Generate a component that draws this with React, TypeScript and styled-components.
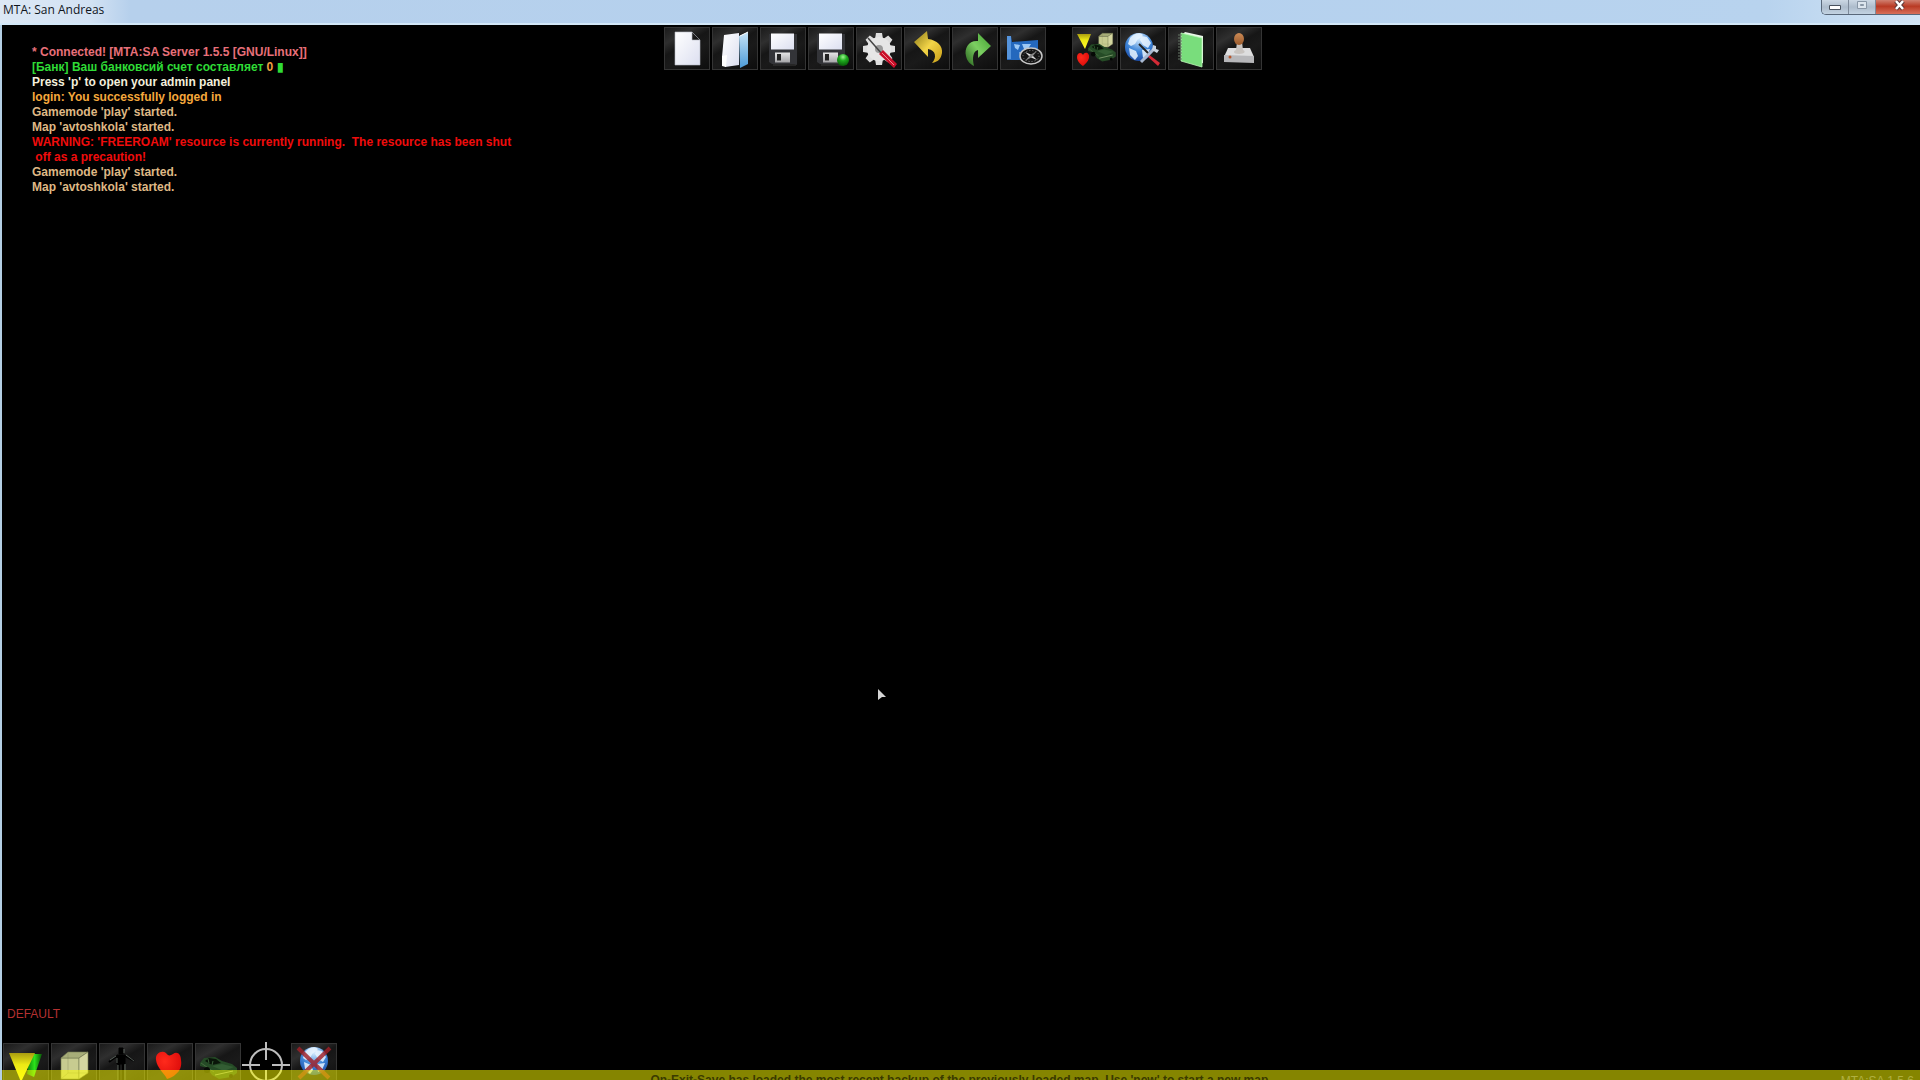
import React from 'react';
import styled, { createGlobalStyle } from 'styled-components';

const Global = createGlobalStyle`
  * { box-sizing: border-box; }
  body { margin: 0; background: #000; }
`;

const Window = styled.div`
  display: flex;
  flex-direction: column;
  height: 100vh;
  overflow: hidden;
  background: #000;
  font-family: "Liberation Sans", Arial, sans-serif;
`;

const TitleBar = styled.header`
  display: flex;
  justify-content: space-between;
  align-items: flex-start;
  flex: none;
  height: 25px;
  padding-left: 3px;
  border-bottom: 2px solid #d3e8f8;
  background: linear-gradient(90deg, #dce8f5 0, #d3e2f3 90px, #b6d0ec 130px, #b5d1ee 60%, #b8d3ee 92%, #d3e5f5 100%);
`;

const Title = styled.h1`
  margin: 0;
  font: 400 12px/20px "Open Sans", "Noto Sans", sans-serif;
  color: #10151c;
`;

const Controls = styled.div`
  display: flex;
  height: 15px;
  border: 1px solid #59687a;
  border-width: 0 0 1px 1px;
  border-radius: 0 0 0 5px;
  overflow: hidden;
`;

const Control = styled.button<{ $close?: boolean }>`
  display: flex;
  justify-content: center;
  align-items: flex-start;
  width: ${(p) => (p.$close ? 44 : 27)}px;
  height: 14px;
  padding: 0 0 0 ${(p) => (p.$close ? 4 : 0)}px;
  border: 0;
  border-right: ${(p) => (p.$close ? 0 : 1)}px solid #7e8b9b;
  background: ${(p) =>
    p.$close
      ? 'linear-gradient(#d08070, #b93a24 45%, #d8705a)'
      : 'linear-gradient(#ccd8e4, #adbccc 50%, #c3d3e2)'};
  svg { display: block; flex: none; }
`;

const Client = styled.main`
  position: relative;
  display: flex;
  flex-direction: column;
  flex: 1;
  min-height: 0;
  overflow: hidden;
  border-left: 2px solid #b4cfe4;
  background: #000;
`;

const Screen = styled.div`
  position: relative;
  flex: 1;
  min-height: 0;
`;

const TopTools = styled.nav`
  position: absolute;
  top: 2px;
  left: 3px;
  right: 0;
  display: flex;
  justify-content: center;
  gap: 26px;
`;

const Group = styled.div`
  display: flex;
  gap: 2px;
`;

const Tool = styled.button<{ $bare?: boolean }>`
  width: 46px;
  height: 43px;
  padding: 0;
  border: 1px solid ${(p) => (p.$bare ? 'transparent' : '#343434')};
  background: ${(p) =>
    p.$bare ? 'none' : 'linear-gradient(150deg, #1b1b1b 0, #2f2f2f 24%, #161616 42%, #1a1a1a 60%, #0d0d0d 100%)'};
  svg { display: block; overflow: visible; }
`;

const Chat = styled.section`
  padding: 20px 30px;
  font-size: 12px;
  font-weight: 700;
  line-height: 15px;
`;

const Line = styled.p<{ $color: string }>`
  margin: 0;
  white-space: pre;
  color: ${(p) => p.$color};
`;

const Amount = styled.span`
  color: #f0a040;
`;

const Mode = styled.p`
  margin: 0 0 20px 5px;
  font-size: 12px;
  line-height: 18px;
  color: #b53030;
`;

const BottomTools = styled.nav`
  display: flex;
  gap: 2px;
  height: 37px;
  padding-left: 1px;
`;

const Notice = styled.footer`
  position: absolute;
  left: 0;
  right: 0;
  bottom: 0;
  display: grid;
  grid-template-columns: 1fr auto 1fr;
  height: 10px;
  padding-top: 3px;
  overflow: hidden;
  background: rgba(255, 255, 0, 0.52);
  font-size: 12px;
  line-height: 14px;
`;

const NoticeText = styled.span`
  grid-column: 2;
  font-weight: 700;
  color: #3a3a00;
`;

const Version = styled.span`
  justify-self: end;
  padding: 1px 6px 0 0;
  color: #b0b040;
`;

const Pointer = styled.svg`
  position: absolute;
  left: 875px;
  top: 664px;
`;

const Gradients = styled.svg`
  position: absolute;
`;

const Defs = () => (
  <Gradients width="0" height="0" aria-hidden="true">
    <defs>
      <linearGradient id="paper" x1="0" y1="0" x2="1" y2="1"><stop offset="0" stopColor="#fff" /><stop offset="1" stopColor="#dcdff0" /></linearGradient>
      <linearGradient id="glass" x1="0" y1="0" x2="0" y2="1"><stop offset="0" stopColor="#c7e4f7" /><stop offset="1" stopColor="#4c9bd8" /></linearGradient>
      <linearGradient id="metal" x1="0" y1="0" x2="0" y2="1"><stop offset="0" stopColor="#e6e6e6" /><stop offset="1" stopColor="#a5a5a8" /></linearGradient>
      <linearGradient id="gold" x1="0" y1="0" x2="1" y2="1"><stop offset="0" stopColor="#8a7818" /><stop offset=".5" stopColor="#f3d548" /><stop offset="1" stopColor="#c79c16" /></linearGradient>
      <linearGradient id="leaf" x1="0" y1="1" x2="1" y2="0"><stop offset="0" stopColor="#26601c" /><stop offset=".5" stopColor="#7cd062" /><stop offset="1" stopColor="#3f9e2e" /></linearGradient>
      <linearGradient id="cone" x1="0" y1="0" x2="0" y2="1"><stop offset="0" stopColor="#a99c10" /><stop offset=".4" stopColor="#ece914" /><stop offset="1" stopColor="#fffb2a" /></linearGradient>
      <linearGradient id="green" x1="0" y1="0" x2="1" y2="0"><stop offset="0" stopColor="#0d7f0a" /><stop offset=".5" stopColor="#2be31b" /><stop offset="1" stopColor="#0a5508" /></linearGradient>
      <radialGradient id="ball" cx=".5" cy=".25" r=".8"><stop offset="0" stopColor="#9bf58e" /><stop offset=".4" stopColor="#1eaa1e" /><stop offset="1" stopColor="#045004" /></radialGradient>
      <radialGradient id="sea" cx=".5" cy=".2" r=".9"><stop offset="0" stopColor="#d9eeff" /><stop offset=".5" stopColor="#3f86d8" /><stop offset="1" stopColor="#123c98" /></radialGradient>
      <radialGradient id="heart" cx=".35" cy=".35" r=".8"><stop offset="0" stopColor="#ff2a1c" /><stop offset="1" stopColor="#d80808" /></radialGradient>
      <linearGradient id="wood" x1="0" y1="0" x2="0" y2="1"><stop offset="0" stopColor="#cc8a55" /><stop offset="1" stopColor="#9a5a2c" /></linearGradient>
    </defs>
  </Gradients>
);

const Disk = () => (
  <g>
    <path d="M8 6h28v31l-3-1H11l-3-2z" fill="#333438" />
    <path d="M10 5.500h23v16H10z" fill="url(#paper)" />
    <path d="M14 24.500h15v10H14z" fill="url(#metal)" />
    <path d="M16 26h4v6.500h-4z" fill="#222" />
    <path d="M12 37h23" stroke="#3a3a3a" />
  </g>
);

const Globe = () => (
  <g>
    <circle cx="18" cy="19" r="14" fill="url(#sea)" />
    <path d="M9 10c4-5 10-6 13-3l-3 3-2 1-3 5-4 2-3-2zM20 8l6 1 4 6-3 5-5-3-3-5zM8 20l7 3 2 5-3 4-5-5zM21 22l8-1-3 7-4 2z" fill="#e9f4ff" opacity=".85" />
  </g>
);

const Car = () => (
  <g>
    <path d="M4 17l4-5 11-1 7 4 10 3 5 4 0 5-6 4-12 2-7-4-5-7-7-2z" fill="#254b26" />
    <path d="M9 15l4-3 7 1 5 4-9 2z" fill="#091509" />
    <path d="M17 15l-1 4M12 13l1 4" stroke="#3a6238" />
    <path d="M16 20l10-2 12 3-10 4z" fill="#335d33" />
    <path d="M19 29l18-4" stroke="#8ba577" />
    <path d="M5 17l13 9" stroke="#47693f" />
    <circle cx="11" cy="24" r="3" fill="#050905" /><circle cx="35" cy="30" r="2" fill="#050905" />
  </g>
);

const Cube = () => (
  <g stroke="#737851" strokeWidth=".6">
    <path d="M9 14h18v21H9z" fill="#c7cb90" />
    <path d="M9 14l7-6h20l-9 6z" fill="#a7ad78" />
    <path d="M27 14l9-6v21l-9 6z" fill="#d4d6a0" />
    <path d="M16 8v21h20M16 29l-7 6" fill="none" opacity=".5" />
  </g>
);

const art: Record<string, React.ReactNode> = {
  new: <path d="M10 4h17l8 8v25H10z M27 4v8h8" fill="url(#paper)" stroke="#b6b8c4" strokeWidth=".6" />,
  open: <g><path d="M26 8l9-4v32l-8 4z" fill="url(#glass)" /><path d="M11 7l15-2v32l-14 2-3-10z" fill="url(#paper)" /><path d="M9 28l5-1-1 12-4-1z" fill="#fff" /><path d="M35 4l-8 4" stroke="#fff" /></g>,
  save: <Disk />,
  saveAs: <g><Disk /><circle cx="34" cy="32" r="6" fill="url(#ball)" /></g>,
  settings: (
    <g>
      <g transform="translate(22 21)">
        {[0, 45, 90, 135, 180, 225, 270, 315].map((a) => <path key={a} d="M-4-10l1-6h6l1 6z" fill="#dedede" transform={`rotate(${a})`} />)}
        <circle r="12" fill="#e6e6e6" /><circle r="4" fill="#9a9a9a" />
      </g>
      <path d="M11 10l14 16" stroke="#444" strokeWidth="1.500" />
      <path d="M22 26l4-4 14 14-3 4z" fill="#c8102a" /><path d="M25 25l12 12" stroke="#f2808c" />
    </g>
  ),
  undo: <path d="M9 14L22 3l1 8c9 1 15 7 14 14-1 6-4 9-10 10 5-5 4-13-4-14l0 8z" fill="url(#gold)" />,
  redo: <path d="M38 18L25 5v8C16 12 11 20 13 28c1 5 4 8 8 10-2-8-1-15 4-16v8z" fill="url(#leaf)" />,
  map: (
    <g>
      <path d="M6 8l4 0 1 6 26-2v20H6z" fill="#2468bd" /><path d="M6 8h4v23H6z" fill="#5594dc" />
      <path d="M13 16l6 1-2 5-3-2zM21 16l9 0-3 5-4 0zM18 24l5 2-3 4z" fill="#9cc8f4" />
      <ellipse cx="30" cy="28" rx="11" ry="8" fill="#151515" stroke="#c5c5c5" strokeWidth="1.500" />
      <ellipse cx="30" cy="28" rx="8" ry="5.500" fill="none" stroke="#8a8a8a" strokeDasharray="1 2" />
      <path d="M24 24l7 3 5 5-7-3z" fill="#ddd" /><path d="M36 23l-5 6-7 4 5-6z" fill="#888" />
    </g>
  ),
  elements: (
    <g>
      <path d="M4 6h14l-6 15z" fill="url(#cone)" />
      <g transform="translate(21 1) scale(.52)"><Cube /></g>
      <g transform="translate(12 7) scale(.75 .8)"><Car /></g>
      <path d="M4 29c0-5 5-5 6-2 2-4 7-2 6 3-1 4-4 6-6 8-3-2-6-5-6-9z" fill="url(#heart)" />
    </g>
  ),
  world: (
    <g><Globe /><path d="M18 16l12 12" stroke="#222" strokeWidth="2" /><path d="M27 26l12 9-2 3-11-10z" fill="#d32a36" /><path d="M20 34l13-13" stroke="#a8b8d0" strokeWidth="3" /><path d="M31 22l1-5 3 1 0 3 3 1-2 3z" fill="#c8d2de" /></g>
  ),
  book: (
    <g><path d="M13 7l3-3 18 4v27l-4 1z" fill="#e9f7e8" /><path d="M12 5l21 5v29l-21-6z" fill="#79dd7c" stroke="#baf5b6" strokeWidth=".8" /><path d="M9 7h4M9 10h4M9 13h4M9 16h4M9 19h4M9 22h4M9 25h4M9 28h4M9 31h4" stroke="#667766" /></g>
  ),
  stamp: (
    <g>
      <path d="M11 20h22l4 9H7z" fill="#dededf" /><path d="M7 27l30 1v7l-30-1z" fill="#b7b7ba" />
      <path d="M20 14h5l1 8c3 1 2 4-4 4s-6-3-3-4z" fill="#c9c4c0" /><ellipse cx="22" cy="11" rx="5" ry="6" fill="url(#wood)" /><circle cx="13" cy="29" r="1.500" fill="#b8562b" />
    </g>
  ),
  markers: <g><path d="M26 10h12l-8 23-7-3z" fill="url(#green)" /><path d="M5 9h26L17 38z" fill="url(#cone)" /></g>,
  cube: <Cube />,
  ped: (
    <g stroke="#000" fill="#000">
      <path d="M19 4h4v6h-4zM17 11h8v9h-8z" /><path d="M17 12l-8 6M25 12l9 5M19 20v19M23 20v19" strokeWidth="2" fill="none" />
      <path d="M24 5v4M26 11l8 6M10 16l6-4M18 21v16M25 20v18M17 14v5" stroke="#77827a" strokeWidth=".7" fill="none" />
    </g>
  ),
  heart: <path d="M8 16c-1-7 6-10 10-7 2 3 4 3 7 1 4-3 8 0 8 6 1 6-1 11-5 14-3 3-6 4-9 5-2-5-10-11-11-19z" fill="url(#heart)" />,
  car: <g transform="translate(0 2)"><Car /></g>,
  aim: <g fill="none" stroke="#bdbdbd"><circle cx="22" cy="21" r="16" strokeWidth="2" /><path d="M22-2v18M22 26v18M-2 21h18M28 21h18" strokeWidth="2" /></g>,
  noWorld: <g><g transform="translate(4 -2)"><Globe /></g><path d="M6 4l31 30M38 4L7 34" stroke="#a02028" strokeWidth="4" opacity=".82" /></g>,
};

const Icon = ({ name }: { name: string }) => (
  <svg width="44" height="41" viewBox="0 0 44 41" aria-hidden="true">{art[name]}</svg>
);

const fileTools = ['new', 'open', 'save', 'saveAs', 'settings', 'undo', 'redo', 'map'];
const viewTools = ['elements', 'world', 'book', 'stamp'];
const elementTools = ['markers', 'cube', 'ped', 'heart', 'car', 'aim', 'noWorld'];

const tools = (names: string[]) =>
  names.map((n) => <Tool key={n} type="button" aria-label={n} $bare={n === 'aim'}><Icon name={n} /></Tool>);

const sand = '#dfb885';

export default function App() {
  return (
    <Window>
      <Global />
      <Defs />
      <TitleBar>
        <Title>MTA: San Andreas</Title>
        <Controls>
          <Control type="button" aria-label="Minimize"><svg width="14" height="14"><path d="M1.500 5.500h11v4h-11z" fill="#fff" stroke="#49525e" /></svg></Control>
          <Control type="button" aria-label="Maximize"><svg width="14" height="14"><path d="M2.500 1.500h9v7h-9z" fill="#dce5ee" stroke="#8997a7" /><path d="M5.500 4.500h3v1h-3z" fill="#aebccb" stroke="#8997a7" /></svg></Control>
          <Control type="button" aria-label="Close" $close><svg width="14" height="14"><path d="M3 1l7 8M10 1L3 9" stroke="#5e3a3a" strokeWidth="4.500" /><path d="M3 1l7 8M10 1L3 9" stroke="#fff" strokeWidth="2.500" /></svg></Control>
        </Controls>
      </TitleBar>
      <Client>
        <Screen>
          <TopTools>
            <Group>{tools(fileTools)}</Group>
            <Group>{tools(viewTools)}</Group>
          </TopTools>
          <Chat>
            <Line $color="#e8707a">* Connected! [MTA:SA Server 1.5.5 [GNU/Linux]]</Line>
            <Line $color="#2fdc36">[Банк] Ваш банковсий счет составляет <Amount>0</Amount> ▮</Line>
            <Line $color="#f3efdc">Press 'p' to open your admin panel</Line>
            <Line $color="#f5a83c">login: You successfully logged in</Line>
            <Line $color={sand}>Gamemode 'play' started.</Line>
            <Line $color={sand}>Map 'avtoshkola' started.</Line>
            <Line $color="#f00c0c">{"WARNING: 'FREEROAM' resource is currently running.  The resource has been shut\n off as a precaution!"}</Line>
            <Line $color={sand}>Gamemode 'play' started.</Line>
            <Line $color={sand}>Map 'avtoshkola' started.</Line>
          </Chat>
          <Pointer width="10" height="12"><path d="M1 0l8 8-4 0-4 3z" fill="#d5d5d5" /></Pointer>
        </Screen>
        <Mode>DEFAULT</Mode>
        <BottomTools>{tools(elementTools)}</BottomTools>
        <Notice>
          <NoticeText>On-Exit-Save has loaded the most recent backup of the previously loaded map. Use 'new' to start a new map.</NoticeText>
          <Version>MTA:SA 1.5.6</Version>
        </Notice>
      </Client>
    </Window>
  );
}
